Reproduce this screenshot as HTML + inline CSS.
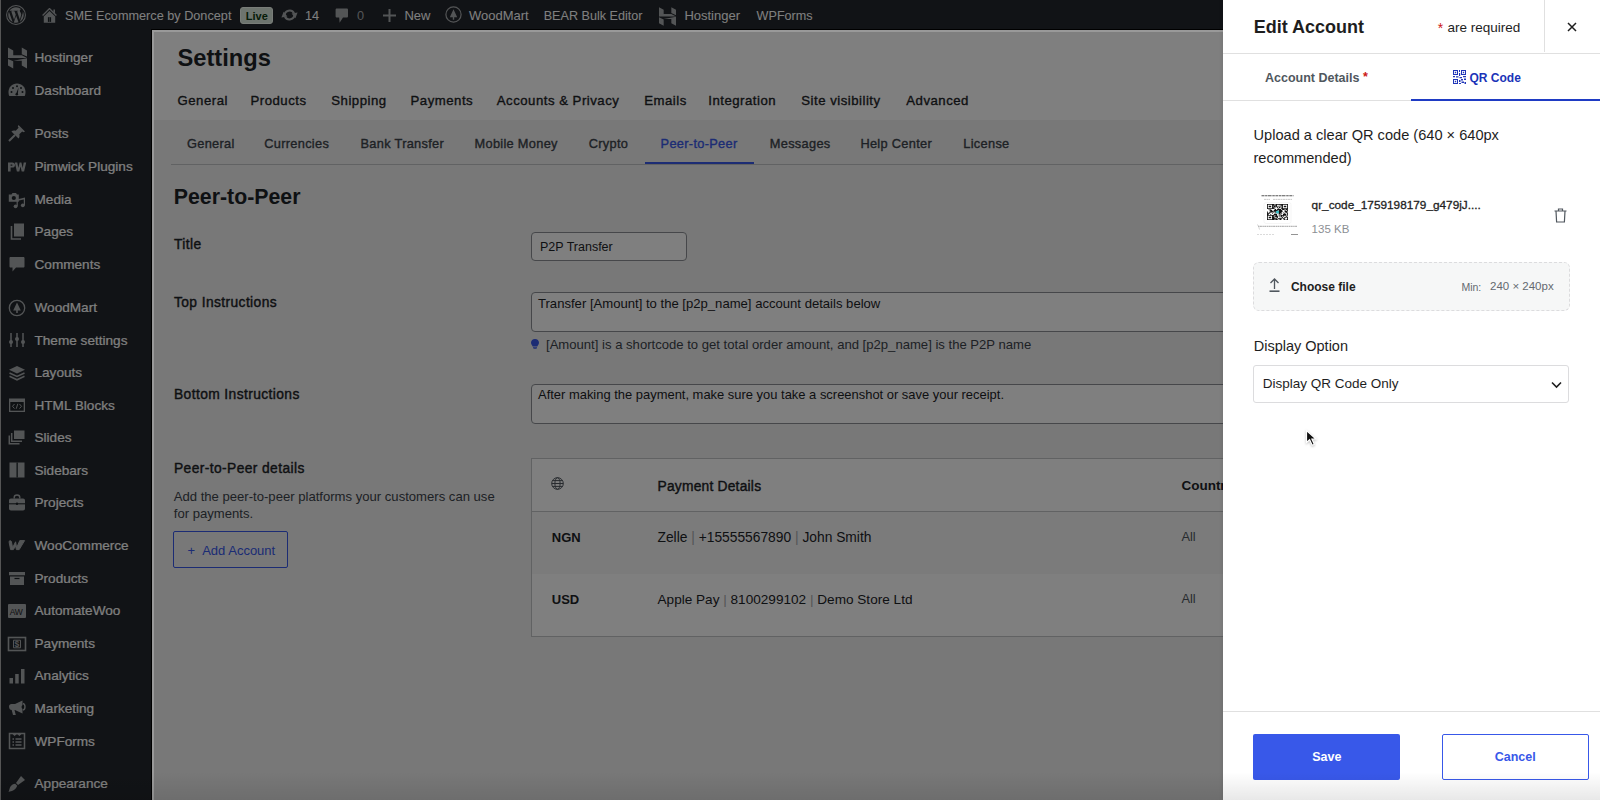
<!DOCTYPE html>
<html><head><meta charset="utf-8"><style>
html,body{margin:0;padding:0;width:1600px;height:800px;overflow:hidden;background:#fff}
body{position:relative;font-family:"Liberation Sans",sans-serif}
.t{position:absolute;white-space:nowrap;line-height:1}
</style></head><body>
<div style="position:absolute;left:0px;top:0px;width:1600px;height:30px;background:#23272c"></div>
<svg style="position:absolute;left:6px;top:5px" width="20" height="20" viewBox="0 0 24 24"><circle cx="12" cy="12" r="11.3" fill="none" stroke="#a7aaad" stroke-width="1.3"/><path transform="translate(12 12) scale(0.86) translate(-12 -12)" d="M21.469 6.825c.84 1.537 1.318 3.3 1.318 5.175 0 3.979-2.156 7.456-5.363 9.325l3.295-9.527c.615-1.54.82-2.771.82-3.864 0-.405-.026-.78-.07-1.11m-7.981.105c.647-.03 1.232-.105 1.232-.105.582-.075.514-.93-.067-.899 0 0-1.755.135-2.88.135-1.064 0-2.85-.15-2.85-.15-.585-.03-.661.855-.075.885 0 0 .54.061 1.125.09l1.68 4.605-2.37 7.08L5.354 6.9c.649-.03 1.234-.1 1.234-.1.585-.075.516-.93-.065-.896 0 0-1.746.138-2.874.138-.2 0-.438-.008-.69-.015C4.911 3.15 8.235 1.215 12 1.215c2.809 0 5.365 1.072 7.286 2.833-.046-.003-.091-.009-.141-.009-1.06 0-1.812.923-1.812 1.914 0 .89.513 1.643 1.060 2.531.411.72.89 1.643.89 2.977 0 .915-.354 1.994-.821 3.479l-1.075 3.585-3.9-11.61.001.014zM12 22.784c-1.059 0-2.081-.153-3.048-.437l3.237-9.406 3.315 9.087c.024.053.05.101.078.149-1.12.393-2.325.609-3.582.609M1.211 12c0-1.564.336-3.05.935-4.39L7.290 21.709C3.694 19.96 1.212 16.271 1.211 12" fill="#a7aaad"/></svg>
<svg style="position:absolute;left:42px;top:8px" width="15" height="15" viewBox="0 0 15 15"><path d="M0.6 7.4 L7.5 0.6 L14.4 7.4" fill="none" stroke="#a7aaad" stroke-width="1.4"/><path d="M11.4 1.6 H13 V5.6 L11.4 4 Z" fill="#a7aaad"/><path d="M1.8 8.6 L7.5 3 L13.2 8.6 V14.8 H1.8 Z" fill="#a7aaad"/><path d="M5.9 9.2 H9.1 V13.9 H5.9 Z" fill="#1d2327"/><path d="M7.3 9.2 H7.7 V13.9 H7.3 Z" fill="#a7aaad"/></svg>
<div class="t" style="left:65px;top:10.05px;font-size:12.7px;color:#ffffff;">SME Ecommerce by Doncept</div>
<div style="position:absolute;left:240px;top:7px;width:33px;height:17px;background:#dbe8dc;border:1px solid #f2fbf2;border-radius:3px;box-sizing:border-box"></div>
<div class="t" style="left:245.8px;top:10.99px;font-size:11px;color:#0c3a10;font-weight:bold;">Live</div>
<svg style="position:absolute;left:281px;top:8px" width="17" height="14" viewBox="0 0 17 14"><path d="M3.6 7.5 A5 5 0 0 1 13 5.2" fill="none" stroke="#a7aaad" stroke-width="2.1"/><path d="M10.6 5.6 L16.6 4.6 L14.4 10.2 Z" fill="#a7aaad"/><path d="M13.4 6.5 A5 5 0 0 1 4 8.8" fill="none" stroke="#a7aaad" stroke-width="2.1"/><path d="M6.4 8.4 L0.4 9.4 L2.6 3.8 Z" fill="#a7aaad"/></svg>
<div class="t" style="left:305px;top:10.05px;font-size:12.7px;color:#ffffff;">14</div>
<svg style="position:absolute;left:335px;top:8px" width="14" height="16" viewBox="0 0 14 16"><path d="M2 0.6 H11.6 C12.5 0.6 13 1.1 13 2 V8.2 C13 9.1 12.5 9.6 11.6 9.6 H8 L4.6 14.8 L4.2 9.6 H2 C1.1 9.6 0.6 9.1 0.6 8.2 V2 C0.6 1.1 1.1 0.6 2 0.6 Z" fill="#a7aaad"/></svg>
<div class="t" style="left:357px;top:10.05px;font-size:12.7px;color:#a7aaad;">0</div>
<svg style="position:absolute;left:383px;top:9px" width="13" height="13" viewBox="0 0 13 13"><path d="M5.5 0 H7.5 V5.5 H13 V7.5 H7.5 V13 H5.5 V7.5 H0 V5.5 H5.5 Z" fill="#a7aaad"/></svg>
<div class="t" style="left:404.4px;top:9.00px;font-size:13px;color:#ffffff;">New</div>
<svg style="position:absolute;left:445px;top:6px" width="17" height="17" viewBox="0 0 17 17"><circle cx="8.5" cy="8.5" r="7.6" fill="none" stroke="#a7aaad" stroke-width="1.2"/><path d="M8.5 3.2 L12.2 11.3 H9.2 V13.8 H7.8 V11.3 H4.8 Z" fill="#a7aaad"/></svg>
<div class="t" style="left:469px;top:9.00px;font-size:13px;color:#ffffff;">WoodMart</div>
<div class="t" style="left:543.7px;top:10.13px;font-size:12.6px;color:#ffffff;">BEAR Bulk Editor</div>
<svg style="position:absolute;left:659px;top:7px" width="17" height="19" viewBox="0 0 20 22"><path d="M0 0 L5.5 3 V8.2 L14.5 8.2 L20 11 H0 Z M14.5 0 L20 3 V9.5 L14.5 7 Z M0 12 L5.5 14.5 V22 L0 19 Z M5.5 13.8 H14.5 V19 L20 22 V11.2 Z" fill="#a7aaad"/></svg>
<div class="t" style="left:684.4px;top:9.00px;font-size:13px;color:#ffffff;">Hostinger</div>
<div class="t" style="left:756.6px;top:10.13px;font-size:12.6px;color:#ffffff;">WPForms</div>
<div style="position:absolute;left:0px;top:30px;width:152px;height:770px;background:#23272c"></div>
<div class="t" style="left:34.5px;top:51.29px;font-size:13.6px;color:#ffffff;-webkit-text-stroke:0.2px #fff;">Hostinger</div>
<div class="t" style="left:34.5px;top:83.89px;font-size:13.6px;color:#ffffff;-webkit-text-stroke:0.2px #fff;">Dashboard</div>
<div class="t" style="left:34.5px;top:127.09px;font-size:13.6px;color:#ffffff;-webkit-text-stroke:0.2px #fff;">Posts</div>
<div class="t" style="left:34.5px;top:160.19px;font-size:13.6px;color:#ffffff;-webkit-text-stroke:0.2px #fff;">Pimwick Plugins</div>
<div class="t" style="left:34.5px;top:192.79px;font-size:13.6px;color:#ffffff;-webkit-text-stroke:0.2px #fff;">Media</div>
<div class="t" style="left:34.5px;top:225.39px;font-size:13.6px;color:#ffffff;-webkit-text-stroke:0.2px #fff;">Pages</div>
<div class="t" style="left:34.5px;top:257.99px;font-size:13.6px;color:#ffffff;-webkit-text-stroke:0.2px #fff;">Comments</div>
<div class="t" style="left:34.5px;top:301.09px;font-size:13.6px;color:#ffffff;-webkit-text-stroke:0.2px #fff;">WoodMart</div>
<div class="t" style="left:34.5px;top:333.69px;font-size:13.6px;color:#ffffff;-webkit-text-stroke:0.2px #fff;">Theme settings</div>
<div class="t" style="left:34.5px;top:366.29px;font-size:13.6px;color:#ffffff;-webkit-text-stroke:0.2px #fff;">Layouts</div>
<div class="t" style="left:34.5px;top:398.89px;font-size:13.6px;color:#ffffff;-webkit-text-stroke:0.2px #fff;">HTML Blocks</div>
<div class="t" style="left:34.5px;top:431.49px;font-size:13.6px;color:#ffffff;-webkit-text-stroke:0.2px #fff;">Slides</div>
<div class="t" style="left:34.5px;top:464.09px;font-size:13.6px;color:#ffffff;-webkit-text-stroke:0.2px #fff;">Sidebars</div>
<div class="t" style="left:34.5px;top:496.19px;font-size:13.6px;color:#ffffff;-webkit-text-stroke:0.2px #fff;">Projects</div>
<div class="t" style="left:34.5px;top:539.29px;font-size:13.6px;color:#ffffff;-webkit-text-stroke:0.2px #fff;">WooCommerce</div>
<div class="t" style="left:34.5px;top:571.99px;font-size:13.6px;color:#ffffff;-webkit-text-stroke:0.2px #fff;">Products</div>
<div class="t" style="left:34.5px;top:604.49px;font-size:13.6px;color:#ffffff;-webkit-text-stroke:0.2px #fff;">AutomateWoo</div>
<div class="t" style="left:34.5px;top:636.99px;font-size:13.6px;color:#ffffff;-webkit-text-stroke:0.2px #fff;">Payments</div>
<div class="t" style="left:34.5px;top:669.49px;font-size:13.6px;color:#ffffff;-webkit-text-stroke:0.2px #fff;">Analytics</div>
<div class="t" style="left:34.5px;top:701.99px;font-size:13.6px;color:#ffffff;-webkit-text-stroke:0.2px #fff;">Marketing</div>
<div class="t" style="left:34.5px;top:735.14px;font-size:13.6px;color:#ffffff;-webkit-text-stroke:0.2px #fff;">WPForms</div>
<div class="t" style="left:34.5px;top:777.39px;font-size:13.6px;color:#ffffff;-webkit-text-stroke:0.2px #fff;">Appearance</div>
<svg style="position:absolute;left:7.5px;top:47.0px" width="19" height="22" viewBox="0 0 20 22"><path d="M0 0 L5.5 3 V8.2 L14.5 8.2 L20 11 H0 Z M14.5 0 L20 3 V9.5 L14.5 7 Z M0 12 L5.5 14.5 V22 L0 19 Z M5.5 13.8 H14.5 V19 L20 22 V11.2 Z" fill="#a7aaad"/></svg>
<svg style="position:absolute;left:7px;top:80.0px" width="20" height="20" viewBox="0 0 20 20"><path d="M10 3.5 C5 3.5 1.5 7.5 1.5 12 C1.5 13.5 1.8 15 2.3 16 H17.7 C18.2 15 18.5 13.5 18.5 12 C18.5 7.5 15 3.5 10 3.5 Z" fill="#a7aaad"/><g fill="#1d2327"><circle cx="4.5" cy="12" r="1"/><circle cx="6" cy="8" r="1"/><circle cx="10" cy="6.2" r="1"/><circle cx="14" cy="8" r="1"/><circle cx="15.5" cy="12" r="1"/><path d="M11.5 7.5 L9 14 L10.8 14.4 Z"/><circle cx="9.8" cy="14.3" r="1.3"/></g></svg>
<svg style="position:absolute;left:7px;top:123.0px" width="20" height="20" viewBox="0 0 20 20"><path d="M11.5 2 L18 8.5 L16.6 9.2 L15.2 8.4 L12.3 11.3 C12.8 13 12.5 14.6 11.5 15.6 L4.4 8.5 C5.4 7.5 7 7.2 8.7 7.7 L11.6 4.8 L10.8 3.4 Z M7.2 12.8 L2 18 L1.8 17.8 L7 12.6 Z" fill="#a7aaad"/><path d="M8 12 L2 18" stroke="#a7aaad" stroke-width="2"/></svg>
<svg style="position:absolute;left:7px;top:157.0px" width="20" height="20" viewBox="0 0 20 20"><path d="M1 5.5 H5.2 C7 5.5 8 6.5 8 8 C8 9.6 7 10.6 5.2 10.6 H3.6 V14.5 H1 Z M3.6 7.5 V8.7 H5 C5.4 8.7 5.5 8.4 5.5 8.1 C5.5 7.8 5.4 7.5 5 7.5 Z" fill="#a7aaad"/><path d="M7.8 5.5 H10.3 L11.3 11 L12.6 5.5 H14.4 L15.7 11 L16.7 5.5 H19.2 L17.1 14.5 H14.7 L13.5 9.5 L12.3 14.5 H9.9 Z" fill="#a7aaad"/></svg>
<svg style="position:absolute;left:7px;top:189.5px" width="20" height="20" viewBox="0 0 20 20"><path d="M1.8 4.5 H4.5 L5.5 3 H9 L10 4.5 H11.8 V11.8 H1.8 Z" fill="#a7aaad"/><circle cx="6.8" cy="8" r="2.1" fill="#1d2327"/><path d="M9.6 9.6 L18 7.6 V15.2 H16.8 V9.4 L10.8 10.8 V16.2 H9.6 Z" fill="#a7aaad"/><circle cx="8.6" cy="16.3" r="1.9" fill="#a7aaad"/><circle cx="15.8" cy="15.3" r="1.9" fill="#a7aaad"/></svg>
<svg style="position:absolute;left:7px;top:221.0px" width="20" height="20" viewBox="0 0 20 20"><path d="M7 2.5 H17 V15.5 H7 Z" fill="#a7aaad"/><path d="M4.5 5 V18 H14" fill="none" stroke="#a7aaad" stroke-width="1.6"/></svg>
<svg style="position:absolute;left:7px;top:254.0px" width="20" height="20" viewBox="0 0 20 20"><path d="M3.5 3 H16.5 C17 3 17.5 3.5 17.5 4 V12.5 C17.5 13 17 13.5 16.5 13.5 H9 L5.5 17.5 V13.5 H3.5 C3 13.5 2.5 13 2.5 12.5 V4 C2.5 3.5 3 3 3.5 3 Z" fill="#a7aaad"/></svg>
<svg style="position:absolute;left:7px;top:298.0px" width="20" height="20" viewBox="0 0 20 20"><circle cx="10" cy="10" r="7.7" fill="none" stroke="#a7aaad" stroke-width="1.3"/><path d="M10 4.5 L13.8 12.5 H10.8 V15 H9.2 V12.5 H6.2 Z" fill="#a7aaad"/></svg>
<svg style="position:absolute;left:7px;top:330.0px" width="20" height="20" viewBox="0 0 20 20"><path d="M4 3 V17 M10 3 V17 M16 3 V17" fill="none" stroke="#a7aaad" stroke-width="1.5"/><circle cx="4" cy="12" r="2" fill="#a7aaad"/><circle cx="10" cy="9" r="2" fill="#a7aaad"/><circle cx="16" cy="12" r="2" fill="#a7aaad"/></svg>
<svg style="position:absolute;left:7px;top:362.5px" width="20" height="20" viewBox="0 0 20 20"><path d="M10 3 L18 6.8 L10 10.6 L2 6.8 Z" fill="#a7aaad"/><path d="M2.5 10 L10 13.5 L17.5 10 M2.5 13.3 L10 16.8 L17.5 13.3" fill="none" stroke="#a7aaad" stroke-width="1.5"/></svg>
<svg style="position:absolute;left:7px;top:395.0px" width="20" height="20" viewBox="0 0 20 20"><path d="M2 3.5 H18 V17 H2 Z" fill="#a7aaad"/><path d="M3.3 7 H16.7 V15.7 H3.3 Z" fill="#1d2327"/><path d="M7.5 9 L5.5 11.3 L7.5 13.6 M12.5 9 L14.5 11.3 L12.5 13.6 M10.8 8.8 L9.2 13.8" fill="none" stroke="#a7aaad" stroke-width="1"/></svg>
<svg style="position:absolute;left:7px;top:427.0px" width="20" height="20" viewBox="0 0 20 20"><path d="M7 3.5 H17.5 V12 H7 Z" fill="#a7aaad"/><path d="M4.7 6 V14.3 H15 M2.3 8.5 V16.7 H12.5" fill="none" stroke="#a7aaad" stroke-width="1.5"/></svg>
<svg style="position:absolute;left:7px;top:460.0px" width="20" height="20" viewBox="0 0 20 20"><path d="M2.5 2.5 H17.5 V17.5 H2.5 Z" fill="#a7aaad"/><path d="M9.5 2.5 H10.8 V17.5 H9.5 Z" fill="#1d2327"/></svg>
<svg style="position:absolute;left:7px;top:493.0px" width="20" height="20" viewBox="0 0 20 20"><path d="M7.2 5.5 V4.5 C7.2 3 8.5 2 10 2 C11.5 2 12.8 3 12.8 4.5 V5.5" fill="none" stroke="#a7aaad" stroke-width="1.4"/><path d="M2 7.5 C2 6.3 2.8 5.5 4 5.5 H16 C17.2 5.5 18 6.3 18 7.5 V15.5 C18 16.7 17.2 17.5 16 17.5 H4 C2.8 17.5 2 16.7 2 15.5 Z" fill="#a7aaad"/><path d="M2 10.8 H18" stroke="#1d2327" stroke-width="1.1"/><circle cx="10" cy="10.8" r="1.2" fill="#1d2327"/></svg>
<svg style="position:absolute;left:7px;top:535.0px" width="20" height="20" viewBox="0 0 20 20"><path d="M2.2 6.2 C3 5.5 4 5.6 4.4 6.6 L5.6 12.8 L8.6 6.8 L9.6 12.8 L12.8 5.6 H17.6 L12.2 14.6 H9.4 L8.6 10.8 L6.4 14.6 H3.6 L2.2 7.6 Z" fill="#a7aaad" stroke="#a7aaad" stroke-width="1" stroke-linejoin="round"/></svg>
<svg style="position:absolute;left:7px;top:568.0px" width="20" height="20" viewBox="0 0 20 20"><path d="M2 4 H18 V7.3 H2 Z M3 8.5 H17 V17 H3 Z" fill="#a7aaad"/><path d="M7.5 10.5 H12.5" stroke="#1d2327" stroke-width="1.2"/></svg>
<svg style="position:absolute;left:7px;top:600.6px" width="20" height="20" viewBox="0 0 20 20"><rect x="1" y="3" width="18" height="14" rx="1" fill="#a7aaad"/><text x="2.8" y="14" font-family="Liberation Sans" font-size="8.5" fill="#1d2327" letter-spacing="-0.3">AW</text></svg>
<svg style="position:absolute;left:7px;top:633.6px" width="20" height="20" viewBox="0 0 20 20"><rect x="1.5" y="3.5" width="17" height="13" fill="none" stroke="#a7aaad" stroke-width="1.6"/><path d="M6.5 6.2 H13.5 V13.8 H6.5 Z" fill="none" stroke="#a7aaad" stroke-width="1"/><text x="7.5" y="13" font-family="Liberation Sans" font-weight="bold" font-size="8.5" fill="#a7aaad">$</text></svg>
<svg style="position:absolute;left:7px;top:665.6px" width="20" height="20" viewBox="0 0 20 20"><path d="M2.5 12 H6 V17.5 H2.5 Z M8.2 8 H11.7 V17.5 H8.2 Z M14 3 H17.5 V17.5 H14 Z" fill="#a7aaad"/></svg>
<svg style="position:absolute;left:7px;top:698.0px" width="20" height="20" viewBox="0 0 20 20"><path d="M2 8.5 C2 7 3 6 4.5 6 H8 L15.5 2.5 V15.5 L8 12 H7.5 L8.8 17 H6 L4.7 12 C3 11.8 2 10.5 2 8.5 Z" fill="#a7aaad"/><circle cx="16.5" cy="9" r="2" fill="#1d2327"/><path d="M16 5.5 C18.5 6 18.8 11.5 16 12" fill="none" stroke="#a7aaad" stroke-width="1.4"/></svg>
<svg style="position:absolute;left:7px;top:731.0px" width="20" height="20" viewBox="0 0 20 20"><path d="M2.5 2.5 H17.5 V17.5 H2.5 Z" fill="none" stroke="#a7aaad" stroke-width="1.5"/><path d="M5 2.5 L7.5 5 L10 3 L12.5 5 L15 2.5 Z" fill="#a7aaad"/><path d="M5.5 8 H7 M8.5 8 H14.5 M5.5 11 H7 M8.5 11 H14.5 M5.5 14 H7 M8.5 14 H14.5" fill="none" stroke="#a7aaad" stroke-width="1.4"/></svg>
<svg style="position:absolute;left:7px;top:773.6px" width="20" height="20" viewBox="0 0 20 20"><path d="M14 2 L18 6 L11 11 L9 9 Z" fill="#a7aaad"/><path d="M8.2 9.8 L10.2 11.8 C9.5 14 8 16 5 17 C3.5 17.5 2 17.8 1.5 18 C2.5 16 2.5 14 3.5 12.5 C4.5 11 6.5 10 8.2 9.8 Z" fill="#a7aaad"/></svg>
<div style="position:absolute;left:152px;top:30px;width:1071px;height:770px;background:#f0f0f1"></div>
<div style="position:absolute;left:152px;top:30px;width:1071px;height:90px;background:#ffffff"></div>
<div style="position:absolute;left:152px;top:120px;width:1071px;height:44px;background:#f0f0f1"></div>
<div style="position:absolute;left:171px;top:164px;width:1052px;height:1px;background:#c3c4c7"></div>
<div class="t" style="left:177.5px;top:47.14px;font-size:23.7px;color:#1d2327;font-weight:bold;">Settings</div>
<div class="t" style="left:177.5px;top:94.43px;font-size:13.2px;color:#1d2327;-webkit-text-stroke:0.35px #1d2327;letter-spacing:0.5px;">General</div>
<div class="t" style="left:250.5px;top:94.43px;font-size:13.2px;color:#1d2327;-webkit-text-stroke:0.35px #1d2327;letter-spacing:0.5px;">Products</div>
<div class="t" style="left:331.25px;top:94.43px;font-size:13.2px;color:#1d2327;-webkit-text-stroke:0.35px #1d2327;letter-spacing:0.5px;">Shipping</div>
<div class="t" style="left:410.5px;top:94.43px;font-size:13.2px;color:#1d2327;-webkit-text-stroke:0.35px #1d2327;letter-spacing:0.5px;">Payments</div>
<div class="t" style="left:496.75px;top:94.43px;font-size:13.2px;color:#1d2327;-webkit-text-stroke:0.35px #1d2327;letter-spacing:0.5px;">Accounts &amp; Privacy</div>
<div class="t" style="left:644.25px;top:94.43px;font-size:13.2px;color:#1d2327;-webkit-text-stroke:0.35px #1d2327;letter-spacing:0.5px;">Emails</div>
<div class="t" style="left:708.25px;top:94.43px;font-size:13.2px;color:#1d2327;-webkit-text-stroke:0.35px #1d2327;letter-spacing:0.5px;">Integration</div>
<div class="t" style="left:801.25px;top:94.43px;font-size:13.2px;color:#1d2327;-webkit-text-stroke:0.35px #1d2327;letter-spacing:0.5px;">Site visibility</div>
<div class="t" style="left:906.25px;top:94.43px;font-size:13.2px;color:#1d2327;-webkit-text-stroke:0.35px #1d2327;letter-spacing:0.5px;">Advanced</div>
<div class="t" style="left:187px;top:138.46px;font-size:12.8px;color:#3c434a;letter-spacing:0.3px;-webkit-text-stroke:0.35px #3c434a;">General</div>
<div class="t" style="left:264.25px;top:138.46px;font-size:12.8px;color:#3c434a;letter-spacing:0.3px;-webkit-text-stroke:0.35px #3c434a;">Currencies</div>
<div class="t" style="left:360.5px;top:138.46px;font-size:12.8px;color:#3c434a;letter-spacing:0.3px;-webkit-text-stroke:0.35px #3c434a;">Bank Transfer</div>
<div class="t" style="left:474.5px;top:138.46px;font-size:12.8px;color:#3c434a;letter-spacing:0.3px;-webkit-text-stroke:0.35px #3c434a;">Mobile Money</div>
<div class="t" style="left:588.7px;top:138.46px;font-size:12.8px;color:#3c434a;letter-spacing:0.3px;-webkit-text-stroke:0.35px #3c434a;">Crypto</div>
<div class="t" style="left:660.6px;top:138.46px;font-size:12.8px;color:#3858e9;letter-spacing:0.3px;-webkit-text-stroke:0.35px #3858e9;">Peer-to-Peer</div>
<div class="t" style="left:769.8px;top:138.46px;font-size:12.8px;color:#3c434a;letter-spacing:0.3px;-webkit-text-stroke:0.35px #3c434a;">Messages</div>
<div class="t" style="left:860.4px;top:138.46px;font-size:12.8px;color:#3c434a;letter-spacing:0.3px;-webkit-text-stroke:0.35px #3c434a;">Help Center</div>
<div class="t" style="left:963.3px;top:138.46px;font-size:12.8px;color:#3c434a;letter-spacing:0.3px;-webkit-text-stroke:0.35px #3c434a;">License</div>
<div style="position:absolute;left:645px;top:162px;width:109px;height:2px;background:#3858e9"></div>
<div class="t" style="left:173.8px;top:187.17px;font-size:21.3px;color:#1d2327;font-weight:bold;">Peer-to-Peer</div>
<div class="t" style="left:174px;top:237.52px;font-size:13.8px;color:#1d2327;-webkit-text-stroke:0.4px #1d2327;letter-spacing:0.4px;">Title</div>
<div class="t" style="left:174px;top:296.32px;font-size:13.8px;color:#1d2327;-webkit-text-stroke:0.4px #1d2327;letter-spacing:0.4px;">Top Instructions</div>
<div class="t" style="left:174px;top:388.42px;font-size:13.8px;color:#1d2327;-webkit-text-stroke:0.4px #1d2327;letter-spacing:0.4px;">Bottom Instructions</div>
<div class="t" style="left:174px;top:462.32px;font-size:13.8px;color:#1d2327;-webkit-text-stroke:0.4px #1d2327;letter-spacing:0.4px;">Peer-to-Peer details</div>
<div style="position:absolute;left:531px;top:232px;width:154px;height:27px;background:#fff;border:1px solid #8c8f94;border-radius:4px"></div>
<div class="t" style="left:540px;top:240.67px;font-size:12.5px;color:#1d2327;">P2P Transfer</div>
<div style="position:absolute;left:531px;top:292px;width:700px;height:38px;background:#fff;border:1px solid #8c8f94;border-radius:4px"></div>
<div class="t" style="left:538px;top:296.81px;font-size:13.1px;color:#1d2327;">Transfer [Amount] to the [p2p_name] account details below</div>
<svg style="position:absolute;left:531px;top:339px" width="8" height="10" viewBox="0 0 8 10"><path d="M4 0 C1.6 0 0 1.7 0 3.8 C0 5.4 1.2 6.2 1.6 7.4 H6.4 C6.8 6.2 8 5.4 8 3.8 C8 1.7 6.4 0 4 0 Z M2 8.2 H6 V9.2 C5.5 9.8 2.5 9.8 2 9.2 Z" fill="#3858e9"/></svg>
<div class="t" style="left:546px;top:338.21px;font-size:13.1px;color:#3c434a;">[Amount] is a shortcode to get total order amount, and [p2p_name] is the P2P name</div>
<div style="position:absolute;left:531px;top:384px;width:700px;height:38px;background:#fff;border:1px solid #8c8f94;border-radius:4px"></div>
<div class="t" style="left:538px;top:389.04px;font-size:12.95px;color:#1d2327;">After making the payment, make sure you take a screenshot or save your receipt.</div>
<div class="t" style="left:173.75px;top:489.71px;font-size:13.1px;color:#3c434a;">Add the peer-to-peer platforms your customers can use</div>
<div class="t" style="left:173.75px;top:506.51px;font-size:13.1px;color:#3c434a;">for payments.</div>
<div style="position:absolute;left:173px;top:531px;width:113px;height:35px;border:1px solid #3858e9;border-radius:2px"></div>
<div class="t" style="left:187.5px;top:544.00px;font-size:13px;color:#3858e9;">+</div>
<div class="t" style="left:202.2px;top:543.80px;font-size:13px;color:#3858e9;">Add Account</div>
<div style="position:absolute;left:531px;top:458px;width:700px;height:179px;background:#fff;border:1px solid #c3c4c7;box-sizing:border-box"></div>
<div style="position:absolute;left:532px;top:511px;width:699px;height:1px;background:#c3c4c7"></div>
<div style="position:absolute;left:532px;top:512px;width:699px;height:62px;background:#f6f7f7"></div>
<svg style="position:absolute;left:551px;top:477px" width="13" height="13" viewBox="0 0 13 13" fill="none" stroke="#50575e" stroke-width="1"><circle cx="6.5" cy="6.5" r="5.8"/><ellipse cx="6.5" cy="6.5" rx="2.6" ry="5.8"/><path d="M0.7 6.5 H12.3 M1.5 3.6 H11.5 M1.5 9.4 H11.5"/></svg>
<div class="t" style="left:657.5px;top:479.72px;font-size:13.8px;color:#1d2327;-webkit-text-stroke:0.4px #1d2327;letter-spacing:0.22px;">Payment Details</div>
<div class="t" style="left:1181.4px;top:479.07px;font-size:13.5px;color:#1d2327;font-weight:bold;">Countr</div>
<div class="t" style="left:551.75px;top:530.80px;font-size:13px;color:#1d2327;font-weight:bold;">NGN</div>
<div class="t" style="left:551.75px;top:592.60px;font-size:13px;color:#1d2327;font-weight:bold;">USD</div>
<div class="t" style="left:657.5px;top:531.32px;font-size:13.8px;color:#1d2327;">Zelle<span style="color:#a7aaad"> | </span>+15555567890<span style="color:#a7aaad"> | </span>John Smith</div>
<div class="t" style="left:657.5px;top:593.49px;font-size:13.6px;color:#1d2327;">Apple Pay<span style="color:#a7aaad"> | </span>8100299102<span style="color:#a7aaad"> | </span>Demo Store Ltd</div>
<div class="t" style="left:1181.4px;top:531.06px;font-size:12.8px;color:#50575e;">All</div>
<div class="t" style="left:1181.4px;top:592.86px;font-size:12.8px;color:#50575e;">All</div>
<div style="position:absolute;left:0px;top:0px;width:1223px;height:800px;background:rgba(0,0,0,0.5)"></div>
<div style="position:absolute;left:0px;top:0px;width:1px;height:800px;background:#555"></div>
<div style="position:absolute;left:151px;top:29px;width:1072px;height:1px;background:#000"></div>
<div style="position:absolute;left:151px;top:29px;width:1px;height:771px;background:#000"></div>
<div style="position:absolute;left:152px;top:30px;width:2px;height:770px;background:#999"></div>
<div style="position:absolute;left:152px;top:30px;width:1071px;height:2px;background:#999"></div>
<div style="position:absolute;left:1223px;top:0px;width:377px;height:800px;background:#fff;box-shadow:-1px 0 4px rgba(0,0,0,0.08)"></div>
<div class="t" style="left:1253.7px;top:18.46px;font-size:18px;color:#1e1e1e;font-weight:bold;">Edit Account</div>
<div class="t" style="left:1437.8px;top:21.15px;font-size:14px;color:#cc1818;">*</div>
<div class="t" style="left:1447.4px;top:21.07px;font-size:13.5px;color:#1e1e1e;">are required</div>
<div style="position:absolute;left:1544px;top:0px;width:1px;height:52px;background:#e0e0e0"></div>
<svg style="position:absolute;left:1567px;top:22px" width="10" height="10" viewBox="0 0 10 10"><path d="M1 1 L9 9 M9 1 L1 9" stroke="#1e1e1e" stroke-width="1.5"/></svg>
<div style="position:absolute;left:1223px;top:53px;width:377px;height:1px;background:#e0e0e0"></div>
<div style="position:absolute;left:1223px;top:100px;width:377px;height:1px;background:#e0e0e0"></div>
<div style="position:absolute;left:1411px;top:99px;width:189px;height:2px;background:#1f3bc4"></div>
<div class="t" style="left:1265px;top:72.02px;font-size:12.5px;color:#50575e;font-weight:bold;">Account Details</div>
<div class="t" style="left:1363px;top:70.92px;font-size:12.5px;color:#cc1818;font-weight:bold;">*</div>
<svg style="position:absolute;left:1453px;top:70px" width="13" height="14" viewBox="0 0 13 14" fill="#1f35b8"><path d="M0 0H5V5H0Z M1 1V4H4V1Z M1.8 1.8H3.2V3.2H1.8Z M8 0H13V5H8Z M9 1V4H12V1Z M9.8 1.8H11.2V3.2H9.8Z M0 9H5V14H0Z M1 10V13H4V10Z M1.8 10.8H3.2V12.2H1.8Z M6 0H7V2H6Z M6 3H7.2V6H6Z M0 6H2V7.2H0Z M3 6.2H5.5V7.4H3Z M6.5 7H9V8.2H6.5Z M10 6H13V7.2H10Z M8 9H10V10.5H8Z M11 8.5H13V10H11Z M6 10H7.5V12H6Z M8.5 11.5H11V13H8.5Z M11.5 12H13V14H11.5Z M6 13H8V14H6Z"/></svg>
<div class="t" style="left:1469.5px;top:71.84px;font-size:12px;color:#1a33b8;font-weight:bold;">QR Code</div>
<div class="t" style="left:1253.5px;top:128.34px;font-size:14.6px;color:#1e1e1e;">Upload a clear QR code (640 × 640px</div>
<div class="t" style="left:1253.5px;top:150.84px;font-size:14.6px;color:#1e1e1e;">recommended)</div>
<svg style="position:absolute;left:1267px;top:204px" width="21" height="16" viewBox="0 0 21 16"><path d="M0.00 0.00h0.84v0.84h-0.84zM0.84 0.00h0.84v0.84h-0.84zM1.68 0.00h0.84v0.84h-0.84zM2.52 0.00h0.84v0.84h-0.84zM3.36 0.00h0.84v0.84h-0.84zM4.20 0.00h0.84v0.84h-0.84zM5.04 0.00h0.84v0.84h-0.84zM5.88 0.00h0.84v0.84h-0.84zM6.72 0.00h0.84v0.84h-0.84zM8.40 0.00h0.84v0.84h-0.84zM9.24 0.00h0.84v0.84h-0.84zM10.08 0.00h0.84v0.84h-0.84zM10.92 0.00h0.84v0.84h-0.84zM11.76 0.00h0.84v0.84h-0.84zM12.60 0.00h0.84v0.84h-0.84zM13.44 0.00h0.84v0.84h-0.84zM14.28 0.00h0.84v0.84h-0.84zM15.12 0.00h0.84v0.84h-0.84zM15.96 0.00h0.84v0.84h-0.84zM16.80 0.00h0.84v0.84h-0.84zM17.64 0.00h0.84v0.84h-0.84zM18.48 0.00h0.84v0.84h-0.84zM19.32 0.00h0.84v0.84h-0.84zM20.16 0.00h0.84v0.84h-0.84zM0.00 0.84h0.84v0.84h-0.84zM5.04 0.84h0.84v0.84h-0.84zM5.88 0.84h0.84v0.84h-0.84zM6.72 0.84h0.84v0.84h-0.84zM8.40 0.84h0.84v0.84h-0.84zM9.24 0.84h0.84v0.84h-0.84zM12.60 0.84h0.84v0.84h-0.84zM14.28 0.84h0.84v0.84h-0.84zM15.12 0.84h0.84v0.84h-0.84zM20.16 0.84h0.84v0.84h-0.84zM0.00 1.68h0.84v0.84h-0.84zM1.68 1.68h0.84v0.84h-0.84zM2.52 1.68h0.84v0.84h-0.84zM3.36 1.68h0.84v0.84h-0.84zM5.04 1.68h0.84v0.84h-0.84zM6.72 1.68h0.84v0.84h-0.84zM7.56 1.68h0.84v0.84h-0.84zM8.40 1.68h0.84v0.84h-0.84zM9.24 1.68h0.84v0.84h-0.84zM10.92 1.68h0.84v0.84h-0.84zM13.44 1.68h0.84v0.84h-0.84zM14.28 1.68h0.84v0.84h-0.84zM15.12 1.68h0.84v0.84h-0.84zM16.80 1.68h0.84v0.84h-0.84zM17.64 1.68h0.84v0.84h-0.84zM18.48 1.68h0.84v0.84h-0.84zM20.16 1.68h0.84v0.84h-0.84zM0.00 2.53h0.84v0.84h-0.84zM1.68 2.53h0.84v0.84h-0.84zM2.52 2.53h0.84v0.84h-0.84zM3.36 2.53h0.84v0.84h-0.84zM5.04 2.53h0.84v0.84h-0.84zM5.88 2.53h0.84v0.84h-0.84zM6.72 2.53h0.84v0.84h-0.84zM7.56 2.53h0.84v0.84h-0.84zM9.24 2.53h0.84v0.84h-0.84zM10.08 2.53h0.84v0.84h-0.84zM11.76 2.53h0.84v0.84h-0.84zM12.60 2.53h0.84v0.84h-0.84zM15.12 2.53h0.84v0.84h-0.84zM16.80 2.53h0.84v0.84h-0.84zM17.64 2.53h0.84v0.84h-0.84zM18.48 2.53h0.84v0.84h-0.84zM20.16 2.53h0.84v0.84h-0.84zM0.00 3.37h0.84v0.84h-0.84zM5.04 3.37h0.84v0.84h-0.84zM5.88 3.37h0.84v0.84h-0.84zM7.56 3.37h0.84v0.84h-0.84zM10.08 3.37h0.84v0.84h-0.84zM11.76 3.37h0.84v0.84h-0.84zM12.60 3.37h0.84v0.84h-0.84zM14.28 3.37h0.84v0.84h-0.84zM15.12 3.37h0.84v0.84h-0.84zM20.16 3.37h0.84v0.84h-0.84zM0.00 4.21h0.84v0.84h-0.84zM0.84 4.21h0.84v0.84h-0.84zM1.68 4.21h0.84v0.84h-0.84zM2.52 4.21h0.84v0.84h-0.84zM3.36 4.21h0.84v0.84h-0.84zM4.20 4.21h0.84v0.84h-0.84zM5.04 4.21h0.84v0.84h-0.84zM5.88 4.21h0.84v0.84h-0.84zM6.72 4.21h0.84v0.84h-0.84zM10.92 4.21h0.84v0.84h-0.84zM14.28 4.21h0.84v0.84h-0.84zM15.12 4.21h0.84v0.84h-0.84zM15.96 4.21h0.84v0.84h-0.84zM16.80 4.21h0.84v0.84h-0.84zM17.64 4.21h0.84v0.84h-0.84zM18.48 4.21h0.84v0.84h-0.84zM19.32 4.21h0.84v0.84h-0.84zM20.16 4.21h0.84v0.84h-0.84zM1.68 5.05h0.84v0.84h-0.84zM3.36 5.05h0.84v0.84h-0.84zM7.56 5.05h0.84v0.84h-0.84zM8.40 5.05h0.84v0.84h-0.84zM10.08 5.05h0.84v0.84h-0.84zM10.92 5.05h0.84v0.84h-0.84zM11.76 5.05h0.84v0.84h-0.84zM12.60 5.05h0.84v0.84h-0.84zM13.44 5.05h0.84v0.84h-0.84zM15.12 5.05h0.84v0.84h-0.84zM15.96 5.05h0.84v0.84h-0.84zM16.80 5.05h0.84v0.84h-0.84zM18.48 5.05h0.84v0.84h-0.84zM19.32 5.05h0.84v0.84h-0.84zM20.16 5.05h0.84v0.84h-0.84zM2.52 5.89h0.84v0.84h-0.84zM3.36 5.89h0.84v0.84h-0.84zM4.20 5.89h0.84v0.84h-0.84zM6.72 5.89h0.84v0.84h-0.84zM7.56 5.89h0.84v0.84h-0.84zM8.40 5.89h0.84v0.84h-0.84zM9.24 5.89h0.84v0.84h-0.84zM10.08 5.89h0.84v0.84h-0.84zM11.76 5.89h0.84v0.84h-0.84zM12.60 5.89h0.84v0.84h-0.84zM13.44 5.89h0.84v0.84h-0.84zM14.28 5.89h0.84v0.84h-0.84zM17.64 5.89h0.84v0.84h-0.84zM20.16 5.89h0.84v0.84h-0.84zM3.36 6.74h0.84v0.84h-0.84zM4.20 6.74h0.84v0.84h-0.84zM5.04 6.74h0.84v0.84h-0.84zM6.72 6.74h0.84v0.84h-0.84zM7.56 6.74h0.84v0.84h-0.84zM8.40 6.74h0.84v0.84h-0.84zM9.24 6.74h0.84v0.84h-0.84zM10.08 6.74h0.84v0.84h-0.84zM10.92 6.74h0.84v0.84h-0.84zM11.76 6.74h0.84v0.84h-0.84zM12.60 6.74h0.84v0.84h-0.84zM13.44 6.74h0.84v0.84h-0.84zM14.28 6.74h0.84v0.84h-0.84zM15.12 6.74h0.84v0.84h-0.84zM17.64 6.74h0.84v0.84h-0.84zM18.48 6.74h0.84v0.84h-0.84zM19.32 6.74h0.84v0.84h-0.84zM20.16 6.74h0.84v0.84h-0.84zM0.00 7.58h0.84v0.84h-0.84zM2.52 7.58h0.84v0.84h-0.84zM3.36 7.58h0.84v0.84h-0.84zM4.20 7.58h0.84v0.84h-0.84zM5.04 7.58h0.84v0.84h-0.84zM5.88 7.58h0.84v0.84h-0.84zM6.72 7.58h0.84v0.84h-0.84zM8.40 7.58h0.84v0.84h-0.84zM9.24 7.58h0.84v0.84h-0.84zM10.92 7.58h0.84v0.84h-0.84zM11.76 7.58h0.84v0.84h-0.84zM12.60 7.58h0.84v0.84h-0.84zM13.44 7.58h0.84v0.84h-0.84zM14.28 7.58h0.84v0.84h-0.84zM17.64 7.58h0.84v0.84h-0.84zM18.48 7.58h0.84v0.84h-0.84zM19.32 7.58h0.84v0.84h-0.84zM0.00 8.42h0.84v0.84h-0.84zM1.68 8.42h0.84v0.84h-0.84zM2.52 8.42h0.84v0.84h-0.84zM8.40 8.42h0.84v0.84h-0.84zM9.24 8.42h0.84v0.84h-0.84zM10.08 8.42h0.84v0.84h-0.84zM10.92 8.42h0.84v0.84h-0.84zM11.76 8.42h0.84v0.84h-0.84zM12.60 8.42h0.84v0.84h-0.84zM13.44 8.42h0.84v0.84h-0.84zM15.96 8.42h0.84v0.84h-0.84zM19.32 8.42h0.84v0.84h-0.84zM20.16 8.42h0.84v0.84h-0.84zM0.00 9.26h0.84v0.84h-0.84zM0.84 9.26h0.84v0.84h-0.84zM1.68 9.26h0.84v0.84h-0.84zM5.04 9.26h0.84v0.84h-0.84zM7.56 9.26h0.84v0.84h-0.84zM11.76 9.26h0.84v0.84h-0.84zM12.60 9.26h0.84v0.84h-0.84zM14.28 9.26h0.84v0.84h-0.84zM16.80 9.26h0.84v0.84h-0.84zM17.64 9.26h0.84v0.84h-0.84zM20.16 9.26h0.84v0.84h-0.84zM0.00 10.11h0.84v0.84h-0.84zM0.84 10.11h0.84v0.84h-0.84zM3.36 10.11h0.84v0.84h-0.84zM6.72 10.11h0.84v0.84h-0.84zM7.56 10.11h0.84v0.84h-0.84zM8.40 10.11h0.84v0.84h-0.84zM9.24 10.11h0.84v0.84h-0.84zM11.76 10.11h0.84v0.84h-0.84zM13.44 10.11h0.84v0.84h-0.84zM15.96 10.11h0.84v0.84h-0.84zM16.80 10.11h0.84v0.84h-0.84zM17.64 10.11h0.84v0.84h-0.84zM18.48 10.11h0.84v0.84h-0.84zM20.16 10.11h0.84v0.84h-0.84zM0.00 10.95h0.84v0.84h-0.84zM0.84 10.95h0.84v0.84h-0.84zM1.68 10.95h0.84v0.84h-0.84zM2.52 10.95h0.84v0.84h-0.84zM3.36 10.95h0.84v0.84h-0.84zM4.20 10.95h0.84v0.84h-0.84zM5.04 10.95h0.84v0.84h-0.84zM5.88 10.95h0.84v0.84h-0.84zM6.72 10.95h0.84v0.84h-0.84zM8.40 10.95h0.84v0.84h-0.84zM9.24 10.95h0.84v0.84h-0.84zM11.76 10.95h0.84v0.84h-0.84zM13.44 10.95h0.84v0.84h-0.84zM14.28 10.95h0.84v0.84h-0.84zM15.12 10.95h0.84v0.84h-0.84zM15.96 10.95h0.84v0.84h-0.84zM16.80 10.95h0.84v0.84h-0.84zM17.64 10.95h0.84v0.84h-0.84zM18.48 10.95h0.84v0.84h-0.84zM20.16 10.95h0.84v0.84h-0.84zM0.00 11.79h0.84v0.84h-0.84zM5.04 11.79h0.84v0.84h-0.84zM5.88 11.79h0.84v0.84h-0.84zM7.56 11.79h0.84v0.84h-0.84zM8.40 11.79h0.84v0.84h-0.84zM9.24 11.79h0.84v0.84h-0.84zM10.08 11.79h0.84v0.84h-0.84zM11.76 11.79h0.84v0.84h-0.84zM13.44 11.79h0.84v0.84h-0.84zM14.28 11.79h0.84v0.84h-0.84zM15.96 11.79h0.84v0.84h-0.84zM19.32 11.79h0.84v0.84h-0.84zM0.00 12.63h0.84v0.84h-0.84zM1.68 12.63h0.84v0.84h-0.84zM2.52 12.63h0.84v0.84h-0.84zM3.36 12.63h0.84v0.84h-0.84zM5.04 12.63h0.84v0.84h-0.84zM5.88 12.63h0.84v0.84h-0.84zM6.72 12.63h0.84v0.84h-0.84zM8.40 12.63h0.84v0.84h-0.84zM9.24 12.63h0.84v0.84h-0.84zM10.08 12.63h0.84v0.84h-0.84zM14.28 12.63h0.84v0.84h-0.84zM15.12 12.63h0.84v0.84h-0.84zM17.64 12.63h0.84v0.84h-0.84zM18.48 12.63h0.84v0.84h-0.84zM19.32 12.63h0.84v0.84h-0.84zM20.16 12.63h0.84v0.84h-0.84zM0.00 13.47h0.84v0.84h-0.84zM1.68 13.47h0.84v0.84h-0.84zM2.52 13.47h0.84v0.84h-0.84zM3.36 13.47h0.84v0.84h-0.84zM5.04 13.47h0.84v0.84h-0.84zM5.88 13.47h0.84v0.84h-0.84zM6.72 13.47h0.84v0.84h-0.84zM10.08 13.47h0.84v0.84h-0.84zM12.60 13.47h0.84v0.84h-0.84zM15.12 13.47h0.84v0.84h-0.84zM16.80 13.47h0.84v0.84h-0.84zM17.64 13.47h0.84v0.84h-0.84zM20.16 13.47h0.84v0.84h-0.84zM0.00 14.32h0.84v0.84h-0.84zM5.04 14.32h0.84v0.84h-0.84zM5.88 14.32h0.84v0.84h-0.84zM6.72 14.32h0.84v0.84h-0.84zM7.56 14.32h0.84v0.84h-0.84zM8.40 14.32h0.84v0.84h-0.84zM9.24 14.32h0.84v0.84h-0.84zM10.92 14.32h0.84v0.84h-0.84zM11.76 14.32h0.84v0.84h-0.84zM12.60 14.32h0.84v0.84h-0.84zM13.44 14.32h0.84v0.84h-0.84zM14.28 14.32h0.84v0.84h-0.84zM15.96 14.32h0.84v0.84h-0.84zM16.80 14.32h0.84v0.84h-0.84zM20.16 14.32h0.84v0.84h-0.84zM0.00 15.16h0.84v0.84h-0.84zM0.84 15.16h0.84v0.84h-0.84zM1.68 15.16h0.84v0.84h-0.84zM2.52 15.16h0.84v0.84h-0.84zM3.36 15.16h0.84v0.84h-0.84zM4.20 15.16h0.84v0.84h-0.84zM5.04 15.16h0.84v0.84h-0.84zM5.88 15.16h0.84v0.84h-0.84zM6.72 15.16h0.84v0.84h-0.84zM8.40 15.16h0.84v0.84h-0.84zM9.24 15.16h0.84v0.84h-0.84zM10.08 15.16h0.84v0.84h-0.84zM12.60 15.16h0.84v0.84h-0.84zM13.44 15.16h0.84v0.84h-0.84zM16.80 15.16h0.84v0.84h-0.84zM17.64 15.16h0.84v0.84h-0.84zM19.32 15.16h0.84v0.84h-0.84zM20.16 15.16h0.84v0.84h-0.84z" fill="#111"/><circle cx="10.5" cy="8" r="1.6" fill="#3cc6cf"/></svg>
<svg style="position:absolute;left:1255px;top:192px" width="45" height="46" viewBox="0 0 45 46"><path d="M6.5 3.8 H38.5" stroke="#555" stroke-width="1.1" stroke-dasharray="3 0.6 2 0.5 4 0.7 2.5 0.6"/><path d="M9 7.4 H15 M18 7.4 H37" stroke="#bbb" stroke-width="0.8" stroke-dasharray="2 0.5"/><path d="M3 34.3 H42" stroke="#999" stroke-width="0.9" stroke-dasharray="1.5 0.4 2 0.5"/><path d="M2.5 32.5 Q4 35 4.5 37.5" stroke="#bbb" stroke-width="0.6" fill="none"/><path d="M2 42.5 H20" stroke="#ccc" stroke-width="0.7" stroke-dasharray="2 1"/><path d="M36 42.5 H43" stroke="#888" stroke-width="0.9"/><rect x="9" y="10.5" width="27" height="21" rx="2" fill="none" stroke="#f2f2f2" stroke-width="0.8"/></svg>
<div class="t" style="left:1311.6px;top:200.41px;font-size:11.8px;color:#1e1e1e;-webkit-text-stroke:0.3px #1e1e1e;">qr_code_1759198179_g479jJ....</div>
<div class="t" style="left:1311.6px;top:224.47px;font-size:11.5px;color:#8c8f94;">135 KB</div>
<svg style="position:absolute;left:1554px;top:208px" width="13" height="15" viewBox="0 0 13 15" fill="none" stroke="#50575e" stroke-width="1.2"><path d="M0.5 3 H12.5 M4.5 3 V1 H8.5 V3 M2 3 L2.6 14 H10.4 L11 3"/></svg>
<div style="position:absolute;left:1253px;top:262px;width:317px;height:49px;background:#f6f7f7;border:1px dashed #dcdcde;border-radius:6px;box-sizing:border-box"></div>
<svg style="position:absolute;left:1269px;top:278px" width="11" height="14" viewBox="0 0 11 14" fill="none" stroke="#50575e" stroke-width="1.3"><path d="M5.5 1 V11 M1.5 5 L5.5 1 L9.5 5"/><path d="M0.5 13.2 H10.5" stroke-width="1.6"/></svg>
<div class="t" style="left:1290.9px;top:280.84px;font-size:12px;color:#1e1e1e;font-weight:bold;">Choose file</div>
<div class="t" style="left:1461.4px;top:282.11px;font-size:10.5px;color:#646970;">Min:</div>
<div class="t" style="left:1490px;top:281.27px;font-size:11.5px;color:#646970;">240 × 240px</div>
<div class="t" style="left:1253.7px;top:339.48px;font-size:14.5px;color:#1e1e1e;">Display Option</div>
<div style="position:absolute;left:1253px;top:365px;width:316px;height:38px;background:#fff;border:1px solid #dcdcde;border-radius:3px;box-sizing:border-box"></div>
<div class="t" style="left:1262.7px;top:377.37px;font-size:13.5px;color:#1e1e1e;">Display QR Code Only</div>
<svg style="position:absolute;left:1551px;top:381px" width="11" height="8" viewBox="0 0 11 8"><path d="M1 1.5 L5.5 6 L10 1.5" fill="none" stroke="#1e1e1e" stroke-width="1.6"/></svg>
<svg style="position:absolute;left:1305px;top:429px;filter:drop-shadow(0 1px 1px rgba(0,0,0,0.25))" width="14" height="18" viewBox="0 0 14 18"><path d="M1.5 1.5 V13.5 L4.6 10.8 L7.2 16.2 L9.3 15.2 L6.9 10 L11 10 Z" fill="#111" stroke="#fff" stroke-width="1.2"/></svg>
<div style="position:absolute;left:1223px;top:711px;width:377px;height:1px;background:#e0e0e0"></div>
<div style="position:absolute;left:1253px;top:734px;width:147px;height:46px;background:#3858e9;border-radius:2px"></div>
<div class="t" style="left:1312.25px;top:751.32px;font-size:12.5px;color:#fff;font-weight:bold;">Save</div>
<div style="position:absolute;left:1442px;top:734px;width:147px;height:46px;border:1.5px solid #3858e9;border-radius:2px;box-sizing:border-box"></div>
<div class="t" style="left:1494.75px;top:751.32px;font-size:12.5px;color:#3858e9;font-weight:bold;">Cancel</div>
<div style="position:absolute;left:0px;top:772px;width:1600px;height:28px;background:linear-gradient(rgba(0,0,0,0),rgba(0,0,0,0.09))"></div>
</body></html>
